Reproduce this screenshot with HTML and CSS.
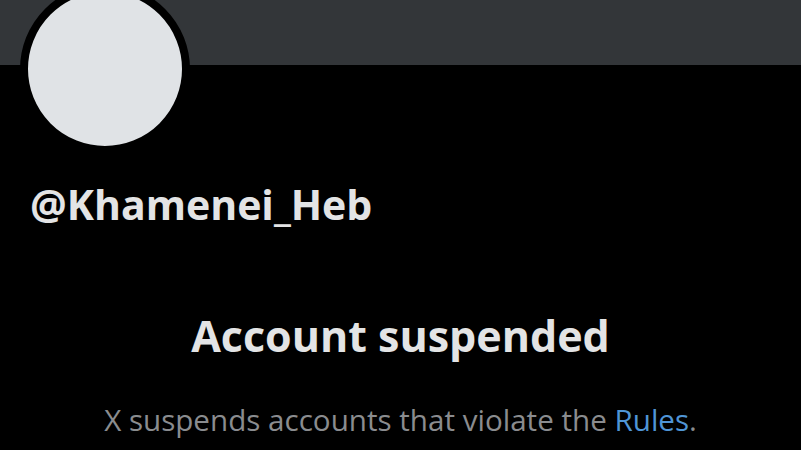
FILE: index.html
```html
<!DOCTYPE html>
<html lang="en">
<head>
<meta charset="utf-8">
<title>Account suspended</title>
<link rel="stylesheet" href="styles.css">
</head>
<body>
<div class="page">
  <header class="banner"></header>
  <section class="profile">
    <div class="avatar"></div>
    <h1 class="handle">@Khamenei_Heb</h1>
  </section>
  <section class="notice">
    <h2 class="title">Account suspended</h2>
    <p class="desc">X suspends accounts that violate the <a class="link" href="#">Rules</a>.</p>
  </section>
</div>
</body>
</html>
```
FILE: styles.css
```css
html, body {
  margin: 0;
  padding: 0;
  background: #000;
}
.page {
  width: 801px;
  height: 450px;
  overflow: hidden;
  background: #000;
  font-family: "Open Sans", Roboto, sans-serif;
}
.banner {
  height: 65px;
  background: #333639;
}
.profile {
  padding: 0 20px;
}
.avatar {
  width: 170px;
  height: 170px;
  box-sizing: border-box;
  border: 8px solid #000;
  border-radius: 50%;
  background: #e0e3e6;
  margin-top: -81px;
}
.handle {
  margin: 26px 0 0 10px;
  font-size: 41px;
  font-weight: 700;
  line-height: 48px;
  color: #e3e4e5;
}
.notice {
  text-align: center;
  margin-top: 84px;
}
.title {
  margin: 0;
  font-size: 43px;
  font-weight: 700;
  line-height: 48px;
  color: #e3e4e5;
}
.desc {
  margin: 43px 0 0;
  font-size: 29.6px;
  font-weight: 400;
  line-height: 34px;
  color: #8a8c8f;
}
.link {
  color: #4f95d6;
  text-decoration: none;
}
```
